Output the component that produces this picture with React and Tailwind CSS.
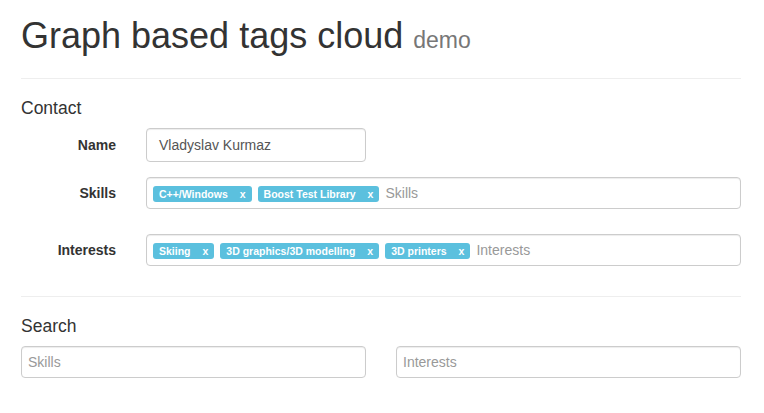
import React from 'react';

const Tag = ({ text }) => (
  <span className="inline-flex items-center h-[16px] px-[6px] pt-[1px] rounded-[3px] bg-[#5bc0de] text-white font-bold text-[10.5px] leading-none whitespace-nowrap">
    {text}
    <span className="ml-[12px]">x</span>
  </span>
);

const TagsInput = ({ tags, placeholder }) => (
  <div className="flex-1 h-[32px] border border-[#ccc] rounded-[4px] bg-white shadow-[inset_0_1px_1px_rgba(0,0,0,0.075)] flex items-center gap-[6px] pl-[6px] pt-[1px]">
    {tags.map((t) => (
      <Tag key={t} text={t} />
    ))}
    <span className="text-[14px] text-[#999]">{placeholder}</span>
  </div>
);

const Row = ({ label, children, className = '' }) => (
  <div className={`flex items-center ${className}`}>
    <label className="w-[95px] text-right font-bold text-[14px] text-[#333]">{label}</label>
    <div className="ml-[30px] flex-1 flex">{children}</div>
  </div>
);

export default function App() {
  const font = { fontFamily: '"Liberation Sans", Arial, sans-serif' };

  return (
    <div className="w-[764px] h-[413px] bg-white overflow-hidden" style={font}>
      <div className="ml-[21px] w-[720px] pt-[16px]">
        <h1 className="text-[36px] leading-[40px] text-[#333] font-normal">
          Graph based tags cloud <span className="text-[23px] text-[#777]">demo</span>
        </h1>
        <div className="mt-[18px] border-t border-[#eee]"></div>

        <h4 className="mt-[19px] text-[17.5px] leading-[20px] text-[#333]">Contact</h4>

        <Row label="Name" className="mt-[10px]">
          <div className="w-[220px] h-[34px] border border-[#ccc] rounded-[4px] shadow-[inset_0_1px_1px_rgba(0,0,0,0.075)] flex items-center pl-[12px] text-[14px] text-[#555]">
            Vladyslav Kurmaz
          </div>
        </Row>

        <Row label="Skills" className="mt-[15px]">
          <TagsInput tags={['C++/Windows', 'Boost Test Library']} placeholder="Skills" />
        </Row>

        <Row label="Interests" className="mt-[25px]">
          <TagsInput tags={['Skiing', '3D graphics/3D modelling', '3D printers']} placeholder="Interests" />
        </Row>

        <div className="mt-[30px] border-t border-[#eee]"></div>

        <h4 className="mt-[19px] text-[17.5px] leading-[20px] text-[#333]">Search</h4>

        <div className="mt-[10px] grid grid-cols-2 gap-[30px]">
          <div className="h-[32px] border border-[#ccc] rounded-[4px] shadow-[inset_0_1px_1px_rgba(0,0,0,0.075)] flex items-center pl-[6px] text-[14px] text-[#999]">
            Skills
          </div>
          <div className="h-[32px] border border-[#ccc] rounded-[4px] shadow-[inset_0_1px_1px_rgba(0,0,0,0.075)] flex items-center pl-[6px] text-[14px] text-[#999]">
            Interests
          </div>
        </div>
      </div>
    </div>
  );
}
